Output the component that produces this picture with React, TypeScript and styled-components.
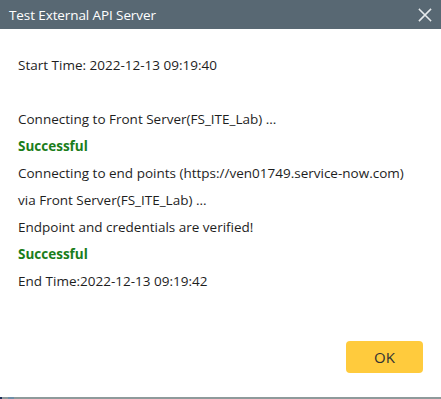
import React from 'react';
import styled, { createGlobalStyle } from 'styled-components';

const GlobalStyle = createGlobalStyle`
  html, body {
    margin: 0;
    padding: 0;
    background: #ffffff;
  }
  body {
    font-family: 'Open Sans', 'Noto Sans', sans-serif;
  }
`;

const Dialog = styled.div`
  width: 441px;
  height: 399px;
  display: flex;
  flex-direction: column;
  background: #ffffff;
  box-sizing: border-box;
`;

const Header = styled.div`
  height: 29px;
  flex: none;
  background: #586873;
  display: flex;
  align-items: center;
  justify-content: space-between;
  padding: 0 8px 0 9px;
  color: #ffffff;
  font-size: 13.5px;
`;

const Title = styled.span`
  letter-spacing: -0.1px;
`;

const CloseButton = styled.button`
  border: none;
  background: transparent;
  padding: 0;
  width: 16px;
  height: 16px;
  display: flex;
  align-items: center;
  justify-content: center;
  cursor: pointer;
`;

const Body = styled.div`
  flex: 1;
  padding: 23px 18px 0;
  font-size: 13.5px;
  line-height: 27px;
  color: #1e1e1e;
`;

const Line = styled.div<{ success?: boolean; gapAfter?: boolean }>`
  font-weight: ${({ success }) => (success ? 700 : 400)};
  color: ${({ success }) => (success ? '#1a7d1a' : '#1e1e1e')};
  margin-bottom: ${({ gapAfter }) => (gapAfter ? '27px' : '0')};
  white-space: nowrap;
`;

const Footer = styled.div`
  display: flex;
  justify-content: flex-end;
  padding: 0 18px 24px 0;
`;

const OkButton = styled.button`
  width: 77px;
  height: 32px;
  border: none;
  border-radius: 4px;
  background: #ffcb3d;
  color: #333333;
  font-family: 'Open Sans', 'Noto Sans', sans-serif;
  font-size: 15px;
  cursor: pointer;
`;

const BottomStrip = styled.div`
  height: 2px;
  flex: none;
  background: #8e9a9b;
  display: flex;
`;

const StripAccent = styled.span<{ color: string; w: number; ml?: number }>`
  width: ${({ w }) => w}px;
  margin-left: ${({ ml }) => ml || 0}px;
  background: ${({ color }) => color};
`;

const CloseIcon = () => (
  <svg width="14" height="14" viewBox="0 0 14 14">
    <path d="M1.5 1.5 L12.5 12.5 M12.5 1.5 L1.5 12.5" stroke="#e6eaec" strokeWidth="1.6" strokeLinecap="square" />
  </svg>
);

const lines: { text: string; success?: boolean; gapAfter?: boolean }[] = [
  { text: 'Start Time: 2022-12-13 09:19:40', gapAfter: true },
  { text: 'Connecting to Front Server(FS_ITE_Lab) ...' },
  { text: 'Successful', success: true },
  { text: 'Connecting to end points (https://ven01749.service-now.com)' },
  { text: 'via Front Server(FS_ITE_Lab) ...' },
  { text: 'Endpoint and credentials are verified!' },
  { text: 'Successful', success: true },
  { text: 'End Time:2022-12-13 09:19:42' },
];

const App: React.FC = () => {
  return (
    <>
      <GlobalStyle />
      <Dialog>
        <Header>
          <Title>Test External API Server</Title>
          <CloseButton aria-label="close">
            <CloseIcon />
          </CloseButton>
        </Header>
        <Body>
          {lines.map((l, i) => (
            <Line key={i} success={l.success} gapAfter={l.gapAfter}>
              {l.text}
            </Line>
          ))}
        </Body>
        <Footer>
          <OkButton>OK</OkButton>
        </Footer>
        <BottomStrip>
          <StripAccent color="#1d2f5c" w={2} />
          <StripAccent color="#6f8fa8" w={6} ml={6} />
        </BottomStrip>
      </Dialog>
    </>
  );
};

export default App;
